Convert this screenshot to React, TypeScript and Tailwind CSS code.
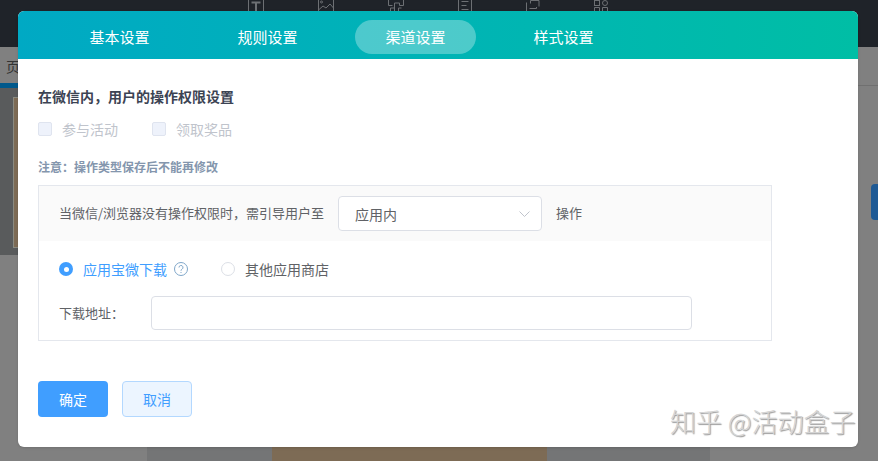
import React from "react";

const tabs = ["基本设置", "规则设置", "渠道设置", "样式设置"];

function ToolIcons() {
  return (
    <div className="flex h-[47px] items-start bg-[#1f2329] pl-[248px] gap-[54px]">
      <svg width="16" height="11" viewBox="0 0 16 11" fill="none" stroke="#6d7074">
        <path d="M.5 0v11M15.5 0v11" />
        <path d="M3.5 2.5h9M8 2.5V11" strokeWidth="2" />
      </svg>
      <svg width="16" height="11" viewBox="0 0 16 11" fill="none" stroke="#6d7074">
        <path d="M.5 0v11M15.5 0v11" />
        <circle cx="3.5" cy="2" r="1" />
        <path d="M.5 10L5 6l3 2 4-4 3.500 4" />
      </svg>
      <svg width="16" height="11" viewBox="0 0 16 11" fill="none" stroke="#6d7074">
        <path d="M.5 0v5.500h4M15.500 0v5.500H11.500V3H6.500v8M2.500 11V8h4M10.500 11V8h3" />
      </svg>
      <svg width="14" height="11" viewBox="0 0 14 11" fill="none" stroke="#6d7074">
        <path d="M.5 0v11M13.500 0v11M3.500 1.500h7M3.500 5.500h5M3.500 9.500h7" />
      </svg>
      <svg width="14" height="11" viewBox="0 0 14 11" fill="none" stroke="#6d7074">
        <path d="M.5 2.500v8.500M3.500 8.500h7V7M4.500 3.500V.5h8.500v6" />
      </svg>
      <svg width="14" height="11" viewBox="0 0 14 11" fill="none" stroke="#6d7074">
        <rect x="0.5" y="0.500" width="5" height="5" />
        <circle cx="11" cy="3" r="2.500" />
        <path d="M.5 11V7.500h5V11M8.500 11V7.500h5V11" />
      </svg>
    </div>
  );
}

function Backdrop() {
  return (
    <div className="flex h-full flex-col bg-[#808080]">
      <ToolIcons />
      <div className="flex flex-1">
        <div className="flex w-[147px] flex-col">
          <div className="h-[36px] pl-[6px] pt-[9px] text-sm leading-5 text-[#333]">页</div>
          <div className="h-[5px] bg-[#00598c]" />
          <div className="h-[167px] bg-[#595b5c] pl-[13px] pt-[9px]">
            <div className="h-[151px] border border-[#8a8a80] bg-[#7d6b55]" />
          </div>
        </div>
        <div className="flex w-[563px] flex-col justify-end bg-[#747576] pl-[125px] pr-[163px]">
          <div className="h-[14px] bg-[#7d6b55]" />
        </div>
        <div className="flex flex-1 flex-col items-end">
          <div className="mt-[38px] h-[1px] w-full bg-[#707070]" />
          <div className="mt-[98px] h-[36px] w-[7px] rounded-l bg-[#1f5a94]" />
        </div>
      </div>
    </div>
  );
}

function Modal() {
  return (
    <div className="absolute left-[18px] top-[11px] flex h-[436px] w-[840px] flex-col overflow-hidden rounded-md bg-white shadow-sm">
      <div className="flex h-[48px] shrink-0 items-center gap-[27px] bg-gradient-to-r from-[#00a9c4] to-[#00bea5] pl-[41px] pt-[4px]">
        {tabs.map((t, i) => (
          <div
            key={t}
            className={`flex h-[34px] w-[121px] items-center justify-center rounded-full text-[15px] text-white ${i === 2 ? "bg-white/30" : ""}`}
          >
            {t}
          </div>
        ))}
      </div>

      <div className="flex flex-1 flex-col pl-[20px]">
        <div className="mt-[27px] text-sm font-bold leading-5 text-[#3c4353]">{"在微信内\uFF0C用户的操作权限设置"}</div>

        <div className="mt-[16px] flex h-[14px] items-center text-sm text-[#c0c4cc]">
          <span className="h-[14px] w-[14px] rounded-[2px] border border-[#dfe4ef] bg-[#eef2fb]" />
          <span className="ml-[10px] w-[90px]">参与活动</span>
          <span className="h-[14px] w-[14px] rounded-[2px] border border-[#dfe4ef] bg-[#eef2fb]" />
          <span className="ml-[10px]">领取奖品</span>
        </div>

        <div className="mt-[23px] text-xs font-bold leading-4 text-[#8496ad]">{"注意\uFF1A操作类型保存后不能再修改"}</div>

        <div className="mt-[10px] h-[156px] w-[734px] border border-[#e4e7ed] text-sm text-[#606266]">
          <div className="flex h-[55px] items-center bg-[#fafafa] pl-[20px]">
            <span className="w-[279px] whitespace-nowrap text-[13px]">{"当微信/浏览器没有操作权限时\uFF0C需引导用户至"}</span>
            <div className="flex h-[35px] w-[204px] items-center justify-between rounded border border-[#dcdfe6] bg-white pl-[16px] pr-[11px]">
              <span>应用内</span>
              <svg width="11" height="6" viewBox="0 0 11 6" fill="none" stroke="#c0c4cc">
                <path d="M.5.500L5.500 5.500 10.500.500" />
              </svg>
            </div>
            <span className="ml-[14px] text-[13px]">操作</span>
          </div>

          <div className="mt-[21px] flex h-[14px] items-center pl-[20px]">
            <span className="flex h-[14px] w-[14px] items-center justify-center rounded-full bg-[#409eff]">
              <span className="h-[5px] w-[5px] rounded-full bg-white" />
            </span>
            <span className="ml-[10px] text-[#409eff]">应用宝微下载</span>
            <svg className="ml-[7px]" width="14" height="14" viewBox="0 0 14 14" fill="none" stroke="#7fa6c9">
              <circle cx="7" cy="7" r="6.500" />
              <path d="M5 5.500a2 2 0 1 1 3 1.700c-.7.400-1 .800-1 1.500" />
              <path d="M7 10v1" />
            </svg>
            <span className="ml-[33px] h-[14px] w-[14px] rounded-full border border-[#dcdfe6] bg-white" />
            <span className="ml-[10px]">其他应用商店</span>
          </div>

          <div className="mt-[20px] flex items-center pl-[20px]">
            <span className="w-[92px] text-[13px]">{"下载地址\uFF1A"}</span>
            <div className="h-[34px] w-[541px] rounded border border-[#dcdfe6] bg-white" />
          </div>
        </div>

        <div className="mt-[40px] flex gap-[14px] text-sm">
          <div className="flex h-[36px] w-[70px] items-center justify-center rounded bg-[#409eff] pb-[1px] text-white">确定</div>
          <div className="flex h-[36px] w-[70px] items-center justify-center rounded border border-[#b3d8ff] bg-[#ecf5ff] pb-[1px] text-[#409eff]">取消</div>
        </div>
      </div>
    </div>
  );
}

export default function App() {
  return (
    <div className="relative h-[461px] w-[878px] overflow-hidden font-['Noto_Sans_CJK_SC','Liberation_Sans',sans-serif]">
      <Backdrop />
      <Modal />
      {/* 水印 */}
      <div className="absolute left-[670px] top-[403px] whitespace-nowrap text-[26px] leading-9 font-light text-[#d4d4d4] [text-shadow:1px_1px_1px_#999]">
        知乎 @活动盒子
      </div>
    </div>
  );
}
